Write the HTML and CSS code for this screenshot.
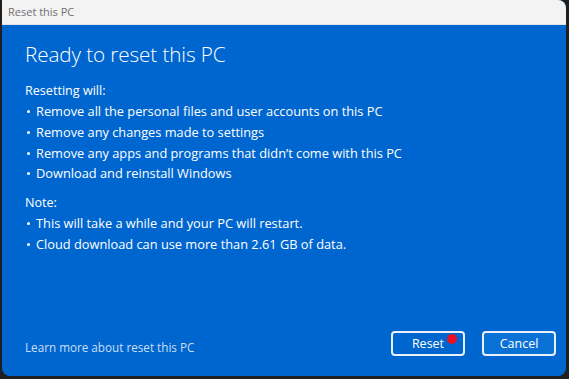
FILE: index.html
```html
<!DOCTYPE html>
<html lang="en">

<head>
    <meta charset="UTF-8">
    <meta name="viewport" content="width=device-width, initial-scale=1.0">
    <title>Reset this PC</title>
    <link rel="stylesheet" href="styles.css">
</head>

<body>
    <div class="window">
        <div class="titlebar">Reset this PC</div>

        <div class="content">
            <h1>Ready to reset this PC</h1>

            <p class="label">Resetting will:</p>
            <ul>
                <li>Remove all the personal files and user accounts on this PC</li>
                <li>Remove any changes made to settings</li>
                <li>Remove any apps and programs that didn’t come with this PC</li>
                <li>Download and reinstall Windows</li>
            </ul>

            <p class="label">Note:</p>
            <ul>
                <li>This will take a while and your PC will restart.</li>
                <li>Cloud download can use more than 2.61 GB of data.</li>
            </ul>
        </div>

        <div class="footer">
            <a class="learn" href="#">Learn more about reset this PC</a>
            <div class="buttons">
                <button class="btn">Reset<span class="dot"></span></button>
                <button class="btn cancel">Cancel</button>
            </div>
        </div>
    </div>
</body>

</html>
```

FILE: styles.css
```css
body {
    margin: 0;
    padding: 0;
    background-color: #1f1f1f;
    font-family: "Open Sans", "Noto Sans", sans-serif;
    width: 569px;
    height: 379px;
    overflow: hidden;
}

.window {
    margin-left: 2px;
    width: 564px;
    height: 376px;
    border-radius: 0 8px 8px 8px;
    overflow: hidden;
    background-color: #0066cf;
    display: flex;
    flex-direction: column;
}

.titlebar {
    height: 24px;
    line-height: 23px;
    background-color: #f3f3f3;
    border-bottom: 1px solid #e2e2e2;
    color: #707070;
    font-size: 11px;
    padding-left: 6px;
}

.content {
    flex: 1;
    padding: 0 23px;
    color: white;
}

h1 {
    font-weight: 300;
    font-size: 20.7px;
    margin: 15px 0 13px 0;
    letter-spacing: -0.1px;
}

.label {
    font-size: 12.6px;
    margin: 0;
    line-height: 20px;
}

ul {
    list-style: none;
    margin: 0 0 9px 0;
    padding: 0;
}

li {
    font-size: 12.8px;
    line-height: 20.8px;
    position: relative;
    padding-left: 11px;
}

li::before {
    content: "";
    position: absolute;
    left: 2px;
    top: 9px;
    width: 3px;
    height: 3px;
    border-radius: 50%;
    background-color: white;
}

.footer {
    display: flex;
    align-items: center;
    justify-content: space-between;
    padding: 0 10px 20px 23px;
}

.learn {
    color: #c9def5;
    text-decoration: none;
    font-size: 11.7px;
    padding-top: 7px;
}

.buttons {
    display: flex;
    gap: 17px;
}

.btn {
    position: relative;
    width: 74px;
    height: 25px;
    border: 2px solid #e8f0fa;
    border-radius: 4px;
    background-color: #0066cf;
    color: white;
    font-family: inherit;
    font-size: 12.5px;
    padding: 0;
}

.cancel {
    background-color: #0a72d6;
}

.dot {
    position: absolute;
    right: 6px;
    top: 1px;
    width: 10px;
    height: 10px;
    border-radius: 5px;
    background-color: #e81123;
}
```
